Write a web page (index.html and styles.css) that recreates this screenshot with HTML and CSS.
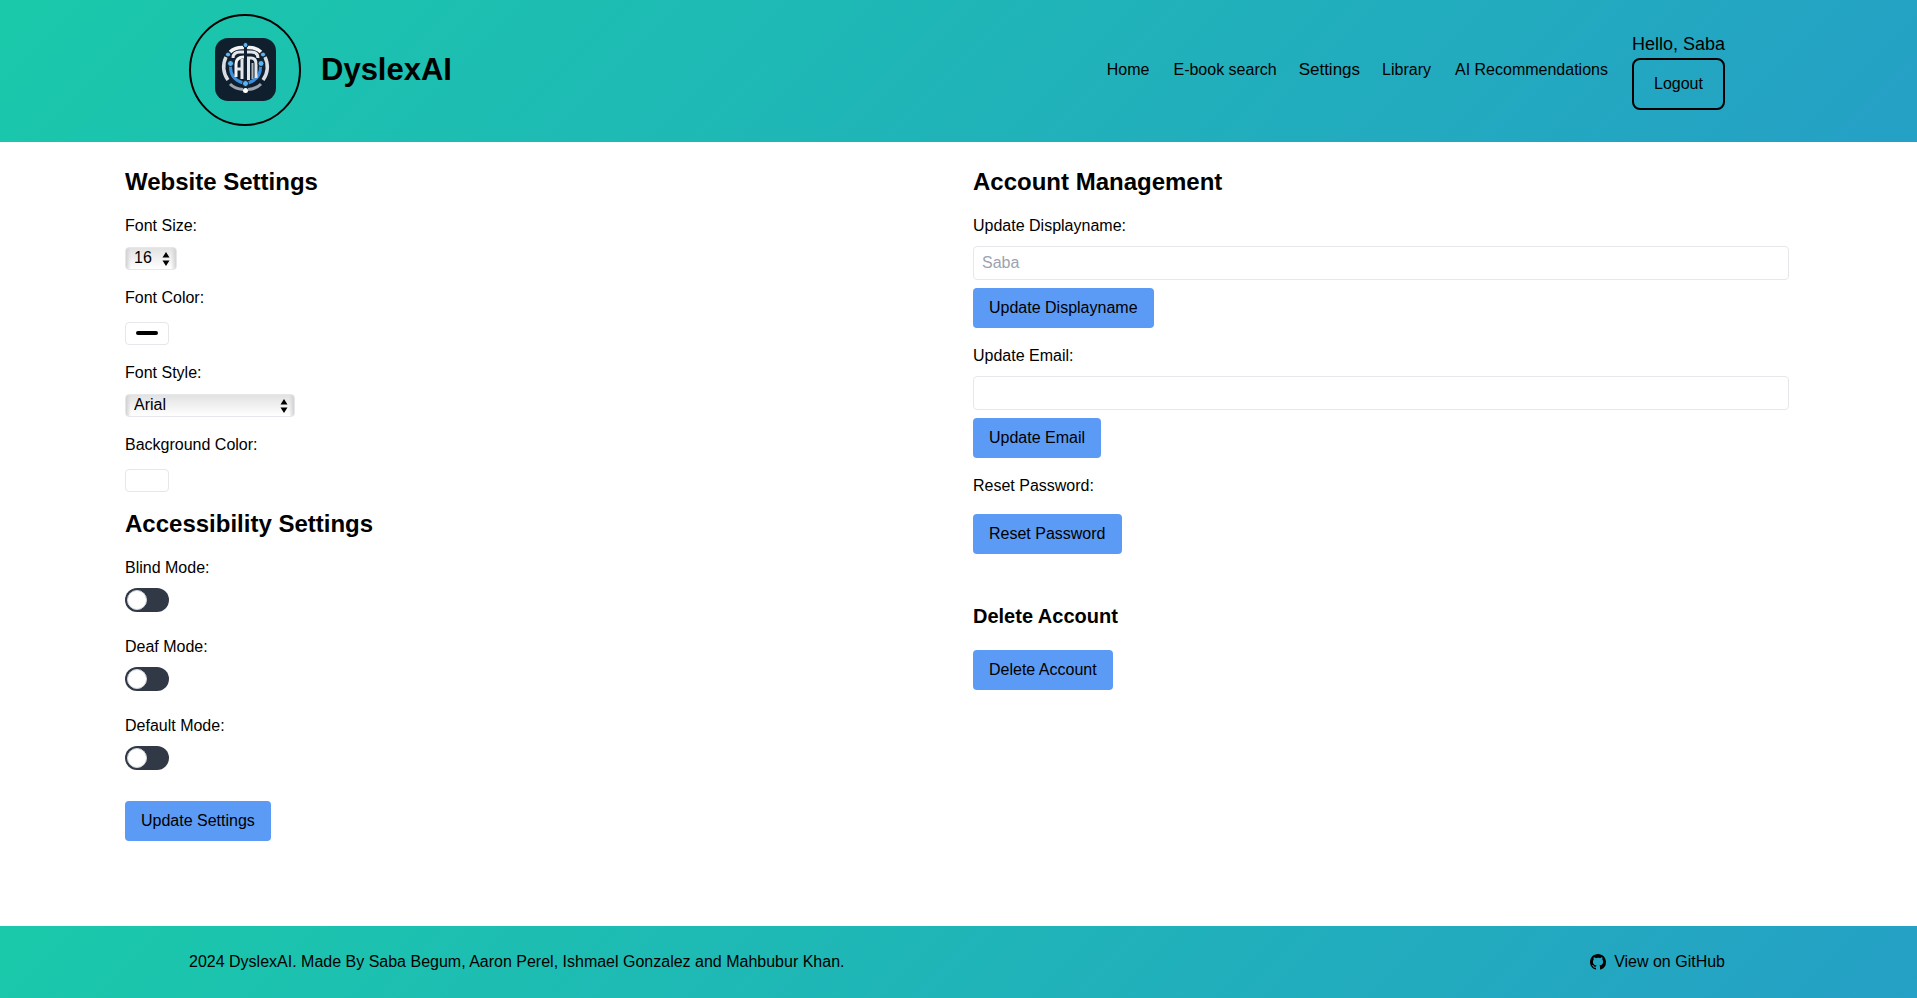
FILE: index.html
```html
<!DOCTYPE html>
<html lang="en">
<head>
<meta charset="utf-8">
<title>DyslexAI</title>
<link rel="stylesheet" href="styles.css">
</head>
<body>
<header class="site-header">
  <div class="container header-row">
    <a class="brand" href="#">
      <span class="brand-ring">
        <svg class="brand-logo" viewBox="0 0 61 63" aria-hidden="true">
          <rect width="61" height="63" rx="13" fill="#101f2e"/>
          <g fill="none" stroke-linecap="butt">
            <path d="M11 19A22 22 0 0 0 13 42" stroke="#d9dde2" stroke-width="3.500"/>
            <path d="M50 19A22 22 0 0 1 48 42" stroke="#d9dde2" stroke-width="3.500"/>
            <path d="M15 46Q20 51 28 51.500M46 46Q41 51 33 51.500" stroke="#9ba4ae" stroke-width="3"/>
            <path d="M15 14Q20 9 29 9.500M32 9.500Q41 9 46 14" stroke="#f3f4f6" stroke-width="3.500"/>
            <path d="M18 20Q18 14 25 14H29M43 20Q43 14 36 14H32" stroke="#e3e6ea" stroke-width="3"/>
            <path d="M15.500 28Q15 41 28 45M45.500 28Q46 41 33 45" stroke="#3b8fe0" stroke-width="3"/>
            <path d="M21 39V26Q21 19 29 19" stroke="#f3f4f6" stroke-width="3"/>
            <path d="M27 41V21M21 31H27" stroke="#e3e6ea" stroke-width="3"/>
            <path d="M33.500 42V20H36Q41 20 41 26V40" stroke="#e3e6ea" stroke-width="3"/>
            <path d="M37.500 41V25" stroke="#aeb6be" stroke-width="2"/>
            <path d="M30.500 8V44" stroke="#101f2e" stroke-width="1.500"/>
          </g>
          <g fill="#5bb5f0" stroke="#101f2e" stroke-width="1">
            <circle cx="30.500" cy="7" r="2.500"/><circle cx="13" cy="16.500" r="2.500"/><circle cx="48" cy="16.500" r="2.500"/>
            <circle cx="15.500" cy="25.500" r="3"/><circle cx="46" cy="25.500" r="3"/><circle cx="30.500" cy="45.500" r="3"/>
          </g>
          <circle cx="30.500" cy="52.500" r="2.500" fill="#fff"/>
        </svg>
      </span>
      <span class="brand-name">DyslexAI</span>
    </a>
    <nav class="nav">
      <a href="#">Home</a>
      <a href="#">E-book search</a>
      <a class="active" href="#">Settings</a>
      <a href="#">Library</a>
      <a href="#">AI Recommendations</a>
      <div class="user">
        <span class="greeting">Hello, Saba</span>
        <button class="logout" type="button">Logout</button>
      </div>
    </nav>
  </div>
</header>

<main class="settings">
  <form class="column">
    <h2>Website Settings</h2>
    <div class="field">
      <label for="size">Font Size:</label>
      <select class="size-select" id="size"><option>16</option></select>
    </div>
    <div class="field">
      <label for="color">Font Color:</label>
      <input class="swatch" id="color" type="color" value="#000000">
    </div>
    <div class="field">
      <label for="style">Font Style:</label>
      <select class="style-select" id="style"><option>Arial</option></select>
    </div>
    <div class="field">
      <label for="background">Background Color:</label>
      <input class="swatch" id="background" type="color" value="#ffffff">
    </div>
    <h2>Accessibility Settings</h2>
    <div class="mode">
      <label for="blind">Blind Mode:</label>
      <input class="toggle" id="blind" type="checkbox" role="switch">
    </div>
    <div class="mode">
      <label for="deaf">Deaf Mode:</label>
      <input class="toggle" id="deaf" type="checkbox" role="switch">
    </div>
    <div class="mode">
      <label for="default">Default Mode:</label>
      <input class="toggle" id="default" type="checkbox" role="switch">
    </div>
    <button class="button save" type="button">Update Settings</button>
  </form>

  <section class="column">
    <h2>Account Management</h2>
    <div class="field">
      <label for="name">Update Displayname:</label>
      <input class="text-input" id="name" type="text" placeholder="Saba">
      <button class="button" type="button">Update Displayname</button>
    </div>
    <div class="field">
      <label for="email">Update Email:</label>
      <input class="text-input" id="email" type="email">
      <button class="button" type="button">Update Email</button>
    </div>
    <div class="reset">
      <p>Reset Password:</p>
      <button class="button" type="button">Reset Password</button>
    </div>
    <div class="danger">
      <h3>Delete Account</h3>
      <button class="button" type="button">Delete Account</button>
    </div>
  </section>
</main>

<footer class="site-footer">
  <div class="container footer-row">
    <p>2024 DyslexAI. Made By Saba Begum, Aaron Perel, Ishmael Gonzalez and Mahbubur Khan.</p>
    <a class="github" href="#">
      <svg width="16" height="16" viewBox="0 0 16 16" fill="currentColor" aria-hidden="true"><path d="M8 0C3.580 0 0 3.580 0 8c0 3.540 2.290 6.530 5.470 7.590.4.070.55-.17.55-.38 0-.19-.01-.82-.01-1.490-2.010.37-2.530-.49-2.690-.94-.09-.23-.48-.94-.82-1.130-.28-.15-.68-.52-.01-.53.63-.01 1.080.58 1.230.82.72 1.210 1.870.87 2.330.66.07-.52.28-.87.51-1.070-1.780-.2-3.640-.89-3.640-3.950 0-.87.31-1.590.82-2.150-.08-.2-.36-1.020.08-2.120 0 0 .67-.21 2.200.82.64-.18 1.320-.27 2-.27s1.360.09 2 .27c1.530-1.040 2.200-.82 2.200-.82.44 1.100.16 1.920.08 2.120.51.56.82 1.270.82 2.150 0 3.070-1.870 3.750-3.650 3.950.29.25.54.73.54 1.480 0 1.070-.01 1.930-.01 2.200 0 .21.15.46.55.38A8.010 8.010 0 0 0 16 8c0-4.420-3.580-8-8-8z"/></svg>
      <span>View on GitHub</span>
    </a>
  </div>
</footer>
</body>
</html>
```
FILE: styles.css
```css
*,
*::before {
  box-sizing: border-box;
  margin: 0;
}

body {
  display: flex;
  flex-direction: column;
  min-height: 100vh;
  background: #fff;
  color: #000;
  font: 16px/24px Arial, "Liberation Sans", sans-serif;
}

a {
  color: inherit;
  text-decoration: none;
}

button,
input,
select {
  font: inherit;
  color: inherit;
}

h2 {
  margin-bottom: 16px;
  font-size: 24px;
  line-height: 32px;
}

h3 {
  margin-bottom: 20px;
  font-size: 20px;
  line-height: 28px;
}

.site-header,
.site-footer {
  padding-right: 3px;
  background: linear-gradient(135deg, #1ac9aa, #25a0c6);
}

.container {
  max-width: 1536px;
  margin: 0 auto;
}

.header-row {
  display: flex;
  align-items: center;
  justify-content: space-between;
  padding: 14px 0 16px;
}

.brand {
  display: flex;
  align-items: center;
  gap: 20px;
}

.brand-ring {
  display: flex;
  align-items: center;
  justify-content: center;
  width: 112px;
  height: 112px;
  padding-bottom: 1px;
  border: 2px solid #000;
  border-radius: 50%;
}

.brand-logo {
  width: 61px;
  height: 63px;
}

.brand-name {
  font-size: 31px;
  line-height: 36px;
  font-weight: 700;
}

.nav {
  display: flex;
  align-items: center;
  gap: 24px;
}

.active {
  margin: 0 -2px;
  font-size: 17px;
}

.user {
  display: flex;
  flex-direction: column;
}

.greeting {
  font-size: 18px;
  line-height: 28px;
}

.logout {
  height: 52px;
  padding: 0 20px;
  border: 2px solid #000;
  border-radius: 8px;
  background: transparent;
}

.settings {
  display: grid;
  flex: 1;
  grid-template-columns: 1fr 1fr;
  gap: 32px;
  padding: 24px 128px 48px 125px;
}

.column,
.field,
.mode,
.reset,
.danger {
  display: flex;
  flex-direction: column;
  align-items: flex-start;
}

.column > *,
.text-input {
  max-width: 100%;
}

.field {
  width: 100%;
  margin-bottom: 16px;
}

.size-select,
.style-select {
  height: 23px;
  margin-top: 9px;
  padding: 0 8px 2px;
  border: 1px solid #e5e7eb;
  border-radius: 4px;
  appearance: none;
  line-height: 19px;
  background:
    url("data:image/svg+xml,%3Csvg xmlns='http://www.w3.org/2000/svg' viewBox='0 0 8 14'%3E%3Cpath d='M.5 5.500L4 0l3.500 5.500zM.5 8.500h7L4 14z'/%3E%3C/svg%3E") right 6px center / 8px 14px no-repeat,
    linear-gradient(90deg, #d2d2d5, transparent 5px, transparent calc(100% - 5px), #d2d2d5),
    linear-gradient(#e2e2e2, #fff);
}

.size-select {
  width: 52px;
}

.style-select {
  width: 170px;
}

.swatch {
  width: 44px;
  height: 23px;
  margin-top: 12px;
  padding: 4px 8px;
  border: 1px solid #e5e7eb;
  border-radius: 4px;
  appearance: none;
  background: #fff;
}

.swatch::-webkit-color-swatch-wrapper {
  padding: 4px 2px 5px;
}

.swatch::-webkit-color-swatch {
  border: 0;
  border-radius: 2px;
}

.mode {
  margin-bottom: 23px;
}

.toggle {
  display: flex;
  align-items: center;
  width: 44px;
  height: 24px;
  margin-top: 8px;
  padding: 2px;
  border-radius: 12px;
  appearance: none;
  background: #323946;
}

.toggle::before {
  width: 20px;
  height: 20px;
  border: 1px solid #d1d5db;
  border-radius: 50%;
  background: #fff;
  content: "";
}

.toggle:checked {
  justify-content: flex-end;
  background: #5b9af5;
}

.button {
  padding: 8px 16px;
  border: 0;
  border-radius: 4px;
  background: #5b9af5;
}

.save {
  margin-top: 8px;
}

.text-input {
  width: 100%;
  height: 34px;
  margin: 8px 0;
  padding: 0 8px;
  border: 1px solid #e5e7eb;
  border-radius: 4px;
  background: #fff;
}

.text-input::placeholder {
  color: #9ca3af;
}

.reset {
  gap: 16px;
}

.danger {
  margin-top: 48px;
}

.footer-row {
  display: flex;
  align-items: center;
  justify-content: space-between;
  padding: 24px 0;
}

.github {
  display: flex;
  align-items: center;
  gap: 8px;
}
```
